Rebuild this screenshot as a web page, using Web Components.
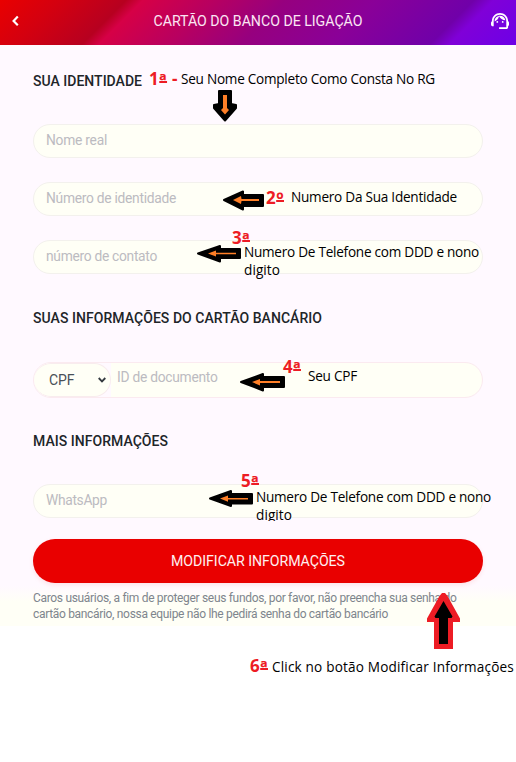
<!DOCTYPE html>
<html lang="pt"><head><meta charset="utf-8"><title>Cartão</title>
<style>html,body{margin:0;background:#fff}body{height:762px;overflow:hidden}</style></head><body>
<bank-page></bank-page>
<script>
const define=(name,html,setup)=>customElements.define(name,class extends HTMLElement{
  connectedCallback(){if(this.shadowRoot)return;
    const t=document.createElement('template');t.innerHTML=html;
    this.attachShadow({mode:'open'}).append(t.content.cloneNode(true));
    if(setup)setup(this,this.shadowRoot);}
});
/* Text that spaces its letters to fill the width given in "w". */
define('fit-text','<style>:host{display:inline-block;white-space:nowrap}</style><span><slot></slot></span>',(el,r)=>{
  const s=r.querySelector('span'),n=el.textContent.length;
  s.style.letterSpacing=((+el.getAttribute('w')-s.getBoundingClientRect().width)/n)+'px';
});
define('top-bar',`<style>
:host{display:flex;align-items:center;height:45px;box-sizing:border-box;padding:0 7px 3px 11px;justify-content:space-between;color:#fbe6f3;font:14.2px Roboto,sans-serif;
background:linear-gradient(135deg,#e90000 0,#d30010 11%,#b70020 22.5%,#d60046 25.5%,#b80060 38%,#96007f 51%,#8a0098 67%,#7000a9 84.5%,#8000d8 88%,#6d00e7 100%)}
svg{display:block}fit-text{margin-left:4px}</style>
<svg width="10" height="12" viewBox="0 0 10 12"><path d="M6.8 1.6 2.6 6l4.2 4.3" fill="none" stroke="#fff" stroke-width="2.2"/></svg>
<fit-text w="209">CARTÃO DO BANCO DE LIGAÇÃO</fit-text>
<svg width="18" height="16" viewBox="2 3 20 18" preserveAspectRatio="none" fill="#fff"><path d="M21 12.22C21 6.73 16.74 3 12 3c-4.69 0-9 3.65-9 9.28-.6.34-1 .98-1 1.72v2c0 1.1.9 2 2 2h1v-6.1c0-3.87 3.13-7 7-7s7 3.13 7 7V19h-8v2h8c1.1 0 2-.9 2-2v-1.22c.59-.31 1-.92 1-1.64v-2.3c0-.7-.41-1.31-1-1.62z"/><circle cx="9" cy="13" r="1"/><circle cx="15" cy="13" r="1"/><path d="M18 11.03C17.52 8.18 15.04 6 12.05 6c-3.03 0-6.29 2.51-6.03 6.45 2.47-1.01 4.33-3.21 4.86-5.89 1.31 2.63 4 4.44 7.12 4.47z"/></svg>`);
define('section-title','<style>:host{display:flex;align-items:center;height:20px;color:#212529;font:500 14px Roboto,sans-serif}</style><slot></slot>');
define('text-field',`<style>:host{display:flex;align-items:center;height:34px;box-sizing:border-box;border:1px solid #f3f1ed;border-radius:18px;background:#fffff6;padding:0 12px 2px;color:#bcbbc1;font:13.8px Roboto,sans-serif}</style><slot></slot>`);
define('document-field',`<style>:host{display:flex;height:36px;box-sizing:border-box;border:1px solid #fbeaf0;border-radius:18px;background:#fffff6;color:#bcbbc1;font:13.8px Roboto,sans-serif;overflow:hidden}
.corner{background:#fff9ff;width:77px}
.select{box-sizing:border-box;width:77px;height:34px;border-radius:17px;background:#fffff6;border:1px solid #f8ecee;border-left:0;padding:0 4px 0 15px;display:flex;align-items:center;justify-content:space-between;color:#495057;font-size:14px}
.id{padding:6px 0 0 6px}</style>
<div class="corner"><div class="select"><fit-text w="25.5">CPF</fit-text><svg width="8" height="6" viewBox="0 0 8 6"><path d="m.7 1 3.3 3.4L7.3 1" fill="none" stroke="#343a40" stroke-width="1.8"/></svg></div></div><div class="id"><fit-text w="100.5">ID de documento</fit-text></div>`);
define('submit-button','<style>:host{display:flex;align-items:center;justify-content:center;height:44px;box-sizing:border-box;padding-bottom:1px;border-radius:22px;background:#e90000;color:#fff0f0;font:14.2px Roboto,sans-serif;box-shadow:0 2px 5px #e9000018}</style><slot></slot>');
define('bank-form',`<style>
:host{display:block;height:581px;box-sizing:border-box;padding:26px 33px 0;background:linear-gradient(#fff9ff 0 541px,#fffff6 557px)}
.group{display:grid;gap:24px;margin:33px 0 35px}.a{margin-bottom:34px}.b{margin:33.5px 0 33.5px}.c{margin:33px 0 21px}
p{margin:7px 0 0;color:#7e858d;font:12px/16px Roboto,sans-serif}p fit-text{display:block}</style>
<section-title><fit-text w="109">SUA IDENTIDADE</fit-text></section-title>
<div class="group a"><text-field><fit-text w="61">Nome real</fit-text></text-field><text-field><fit-text w="130">Número de identidade</fit-text></text-field><text-field><fit-text w="111">número de contato</fit-text></text-field></div>
<section-title><fit-text w="289">SUAS INFORMAÇÕES DO CARTÃO BANCÁRIO</fit-text></section-title>
<div class="group b"><document-field></document-field></div>
<section-title><fit-text w="135">MAIS INFORMAÇÕES</fit-text></section-title>
<div class="group c"><text-field><fit-text w="61">WhatsApp</fit-text></text-field></div>
<submit-button><fit-text w="174">MODIFICAR INFORMAÇÕES</fit-text></submit-button>
<p><fit-text w="423">Caros usuários, a fim de proteger seus fundos, por favor, não preencha sua senha do</fit-text><fit-text w="355">cartão bancário, nossa equipe não lhe pedirá senha do cartão bancário</fit-text></p>`);
/* Callout: label placed freely over the form. */
define('note-text',`<style>:host{position:absolute;white-space:nowrap;color:#000;font:13.6px/18px "Open Sans",sans-serif}:host([num]){color:#ed1c24;font:700 17px/20px "Open Sans",sans-serif}</style><slot></slot>`,el=>{
  el.style.left=el.getAttribute('x')+'px';el.style.top=el.getAttribute('y')+'px';});
define('note-layer',`<style>:host{position:absolute;inset:0;overflow:hidden}svg{position:absolute;inset:0}.cut{position:absolute;left:256px;top:506px;width:60px;height:15px;overflow:hidden}
u{font-size:19px;line-height:0;vertical-align:-2px;text-decoration-thickness:1.6px;text-underline-offset:-6px;text-decoration-skip-ink:none}</style>
<svg width="516" height="762">
<g fill="#000" stroke="#000" stroke-width="2" stroke-linejoin="round">
<path d="M219 91h12v13l5 1v3l-11 12.5-11-12.5v-3l5-1z"/>
<path d="M224 200l19-8.5v3.5h20v11h-20v3.5z"/>
<path d="M198 253.5l22-7.5v3h20v9h-20v3.5z"/>
<path d="M241 382l22-8v3h21v10h-21v3.5z"/>
<path d="M210 498.5l21-7.5v3h21v9.5h-21v2.5z"/>
</g>
<g fill="#ff7f27"><path d="M223 95h4v13l2 2-4 4.5-4-4.5 2-2z"/>
<path d="M233 200l8-4 .5 3H259v2h-17.5l-.5 3z"/>
<path d="M208 253.5l8-3v2.3h20v1.5h-20v2.3z"/>
<path d="M252 382l8-3v2h20v2h-20v2.5z"/>
<path d="M220 498.5l8-3v2.5h20v1.4h-20v2.4z"/></g>
<path d="M442 593h3l2.500 3L460 618.500v3.500h-7v27h-19v-27h-7v-3.500L439.500 596z" fill="#ed1c24"/>
<path d="M443.500 601l9 15.500-1 1.500H448v26h-9v-26h-3.500l-1-1.500z"/>
</svg>
<note-text num x="149" y="69"><fit-text w="29">1<u>ª</u> -</fit-text></note-text>
<note-text x="181" y="70"><fit-text w="254">Seu Nome Completo Como Consta No RG</fit-text></note-text>
<note-text num x="266" y="188"><fit-text w="18">2<u>º</u></fit-text></note-text>
<note-text x="291" y="188"><fit-text w="166">Numero Da Sua Identidade</fit-text></note-text>
<note-text num x="232" y="228"><fit-text w="18">3<u>ª</u></fit-text></note-text>
<note-text x="244" y="243"><fit-text w="235">Numero De Telefone com DDD e nono</fit-text></note-text>
<note-text x="244" y="261"><fit-text w="36">digito</fit-text></note-text>
<note-text num x="283" y="357"><fit-text w="18">4<u>ª</u></fit-text></note-text>
<note-text x="308" y="367"><fit-text w="49">Seu CPF</fit-text></note-text>
<note-text num x="241" y="471"><fit-text w="18">5<u>ª</u></fit-text></note-text>
<note-text x="256" y="488"><fit-text w="235">Numero De Telefone com DDD e nono</fit-text></note-text>
<div class="cut"><note-text x="0" y="0"><fit-text w="36">digito</fit-text></note-text></div>
<note-text num x="250" y="656"><fit-text w="18">6<u>ª</u></fit-text></note-text>
<note-text x="272" y="658"><fit-text w="242">Click no botão Modificar Informações</fit-text></note-text>`);
define('bank-page','<style>:host{display:block;position:relative;width:516px;height:762px;background:#fff}</style><top-bar></top-bar><bank-form></bank-form><note-layer></note-layer>');
</script></body></html>
